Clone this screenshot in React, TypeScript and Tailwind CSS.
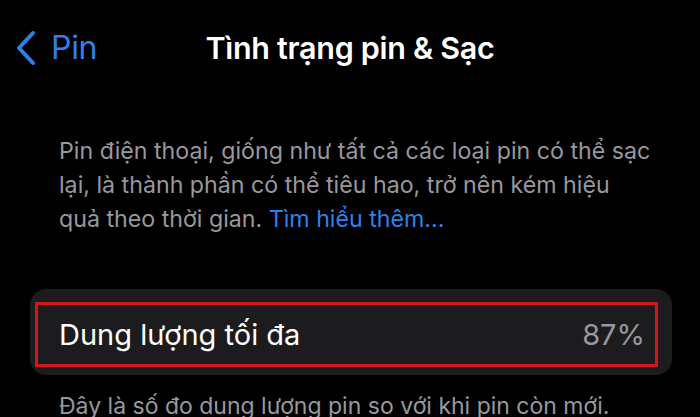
const font = { fontFamily: 'Inter, "Noto Sans", sans-serif' }

function BackChevron() {
  return (
    <svg width="22" height="36" viewBox="0 0 22 36" fill="none" aria-hidden>
      <polyline
        points="18,3 4,18 18,33"
        stroke="currentColor"
        strokeWidth="4"
        strokeLinecap="round"
        strokeLinejoin="round"
      />
    </svg>
  )
}

export default function App() {
  return (
    <div
      className="w-[700px] h-[417px] overflow-hidden bg-black text-white"
      style={font}
    >
      {/* Nav bar */}
      <div className="relative flex items-center h-[96px] pl-[15px]">
        <div className="flex items-center gap-[14px] text-[#2f80ed]">
          <BackChevron />
          <span className="text-[32px] leading-none tracking-[-0.3px]">Pin</span>
        </div>
        <div className="absolute inset-0 flex items-center justify-center pointer-events-none">
          <span className="text-[30.5px] font-semibold tracking-[-0.3px]">
            Tình trạng pin &amp; Sạc
          </span>
        </div>
      </div>

      {/* Description */}
      <p className="mt-[38px] pl-[59px] whitespace-nowrap text-[23.2px] leading-[34px] text-[#98989e]">
        Pin điện thoại, giống như tất cả các loại pin có thể sạc
        <br />
        lại, là thành phần có thể tiêu hao, trở nên kém hiệu
        <br />
        quả theo thời gian.{' '}
        <span className="text-[#2f80ed]">Tìm hiểu thêm...</span>
      </p>

      {/* Maximum capacity */}
      <div className="mt-[53px] ml-[30px] w-[642px] rounded-[16px] bg-[#1c1c1e] pt-[13px] pb-[8px] pl-[5px] pr-[14px]">
        <div className="flex items-center justify-between h-[65px] border-[3px] border-[#d3161b] pl-[21px] pr-[10px]">
          <span className="text-[29px]">Dung lượng tối đa</span>
          <span className="text-[29px] text-[#98989e]">87%</span>
        </div>
      </div>

      <p className="mt-[14px] pl-[59px] whitespace-nowrap text-[23px] leading-[34px] text-[#98989e]">
        Đây là số đo dung lượng pin so với khi pin còn mới.
      </p>
    </div>
  )
}
